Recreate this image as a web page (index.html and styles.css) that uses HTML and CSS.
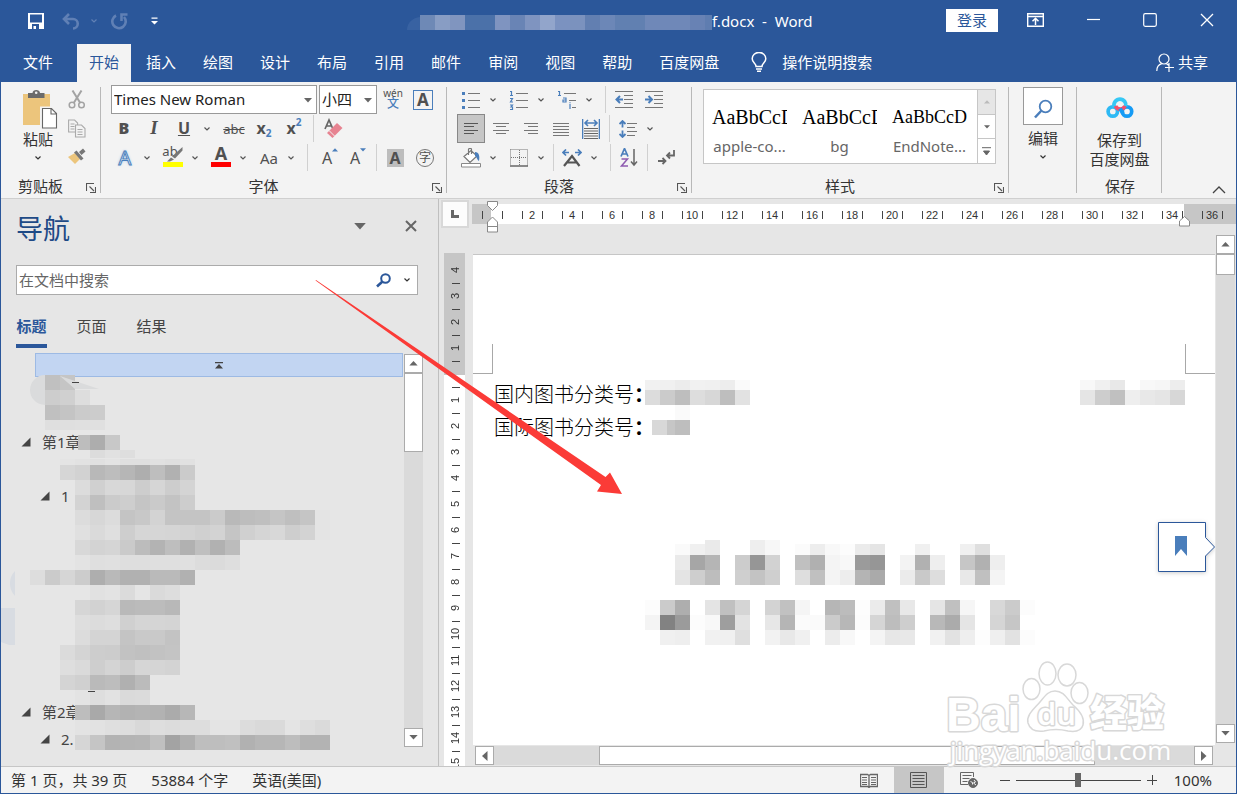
FILE: index.html
```html
<!DOCTYPE html>
<html lang="zh-CN">
<head>
<meta charset="utf-8">
<title>Word</title>
<link rel="stylesheet" href="styles.css">
</head>
<body>
<svg class="defs" aria-hidden="true">
  <symbol id="chev" viewBox="0 0 8 6"><path d="M1.500 1.500L4 4l2.500-2.500" fill="none" stroke="currentColor" stroke-width="1.200"/></symbol>
  <symbol id="launch" viewBox="0 0 10 10"><path d="M.5 8V.5H8M3.500 3.500L8 8M9.500 4v5.500H4" fill="none" stroke="#555" stroke-width="1.100"/></symbol>
  <symbol id="tri-down" viewBox="0 0 10 6"><path d="M0 0h10L5 5.500z" fill="currentColor"/></symbol>
  <symbol id="tri-up" viewBox="0 0 10 6"><path d="M0 5.500h10L5 0z" fill="currentColor"/></symbol>
  <symbol id="node" viewBox="0 0 10 10"><path d="M9.500.5v9H.5z" fill="#444"/></symbol>
</svg>
<div class="window">
  <header class="titlebar">
    <div class="quick">
      <button class="q save" aria-label="保存"><svg width="16" height="16" viewBox="0 0 16 16"><path d="M0 0h16v16H0zM2 1.500v8h12v-8zM4 11v5h1.500v-3H8v3h3v-5z" fill="#fff" fill-rule="evenodd"/></svg></button>
      <button class="q dim" aria-label="撤消"><svg width="18" height="17" viewBox="0 0 18 17"><path d="M7 1L2 6l5 5M2.500 6H11a4.500 4.500 0 0 1 0 9.500" fill="none" stroke="currentColor" stroke-width="2.600"/></svg></button>
      <button class="q dim" aria-label="撤消列表"><svg width="8" height="6"><use href="#chev"/></svg></button>
      <button class="q dim redo" aria-label="重复"><svg width="17" height="17" viewBox="0 0 17 17"><path d="M5 2.500a6.700 6.700 0 1 0 8 1.500M10.500 8V1.500h6" fill="none" stroke="currentColor" stroke-width="2.600"/></svg></button>
      <button class="q" aria-label="自定义"><svg width="7" height="8" viewBox="0 0 7 8"><path d="M.5.500h6v1.200h-6zM0 4h7L3.500 7.500z" fill="#fff"/></svg></button>
    </div>
    <div class="doc-title"><svg class="title-mosaic" width="305" height="38" viewBox="407 13 305 38" data-mosaic="title"></svg><h1>f.docx&nbsp; -&nbsp; Word</h1></div>
    <div class="win-buttons">
      <button class="login">登录</button>
      <button class="q" aria-label="功能区显示选项"><svg width="17" height="14" viewBox="0 0 17 14" fill="none" stroke="#fff"><path d="M.7.700h15.600v12.600H.7zM1 3.500h15" stroke-width="1.400"/><path d="M8.500 12V5.500M5.500 8.200l3-3 3 3" stroke-width="1.500"/></svg></button>
      <button class="q" aria-label="最小化"><svg width="13" height="14" viewBox="0 0 13 14"><path d="M0 6.500h13" stroke="#fff" stroke-width="1.200"/></svg></button>
      <button class="q" aria-label="最大化"><svg width="14" height="14" viewBox="0 0 14 14"><rect x=".7" y=".7" width="12.600" height="12.600" rx="1.500" fill="none" stroke="#fff" stroke-width="1.200"/></svg></button>
      <button class="q" aria-label="关闭"><svg width="14" height="14" viewBox="0 0 14 14"><path d="M1 1l12 12M13 1L1 13" stroke="#fff" stroke-width="1.300"/></svg></button>
    </div>
  </header>

  <nav class="tabs">
    <button class="tab file">文件</button><button class="tab active">开始</button><button class="tab">插入</button><button class="tab">绘图</button><button class="tab">设计</button><button class="tab">布局</button><button class="tab">引用</button><button class="tab">邮件</button><button class="tab">审阅</button><button class="tab">视图</button><button class="tab">帮助</button><button class="tab">百度网盘</button>
    <button class="tab tell"><svg width="16" height="20" viewBox="0 0 16 20" fill="none" stroke="#fff" stroke-width="1.500"><path d="M5 14.500c0-3-3.800-4-3.800-7.800a6.700 6.200 0 0 1 13.600 0c0 3.800-3.800 4.800-3.800 7.800zM5 17h6M6 19.300h4"/></svg>操作说明搜索</button>
    <button class="tab share"><svg width="18" height="19" viewBox="0 0 18 19" fill="none" stroke="#fff" stroke-width="1.200"><circle cx="8" cy="6" r="5"/><path d="M.8 18c0-4 2-6.500 5-7.300M10.500 10.700l2 1.500M13 10v9M9 14.500h9"/></svg>共享</button>
  </nav>

  <section class="ribbon">
    <div class="group clipboard">
      <div class="body clip-body">
        <button class="paste"><svg width="36" height="40" viewBox="0 0 36 40"><path d="M1 4h27v31H1z" fill="#ecc57c"/><path d="M6 3h4.500c0-4 7.500-4 7.500 0h4.500v5H6z" fill="#6b6b6b"/><circle cx="14.200" cy="2.800" r="1.300" fill="#f3f3f3"/><path d="M19.500 18h10l5 5v15.500h-15z" fill="#fff" stroke="#f3f3f3" stroke-width="3"/><path d="M20.500 18.500h9l5 5v14.500h-14zM29 18.500v5.500h5.500" fill="#fff" stroke="#666" stroke-width="1.100"/></svg><span>粘贴</span><svg width="8" height="6"><use href="#chev"/></svg></button>
        <div class="clip-side">
          <button class="ic" aria-label="剪切"><svg width="18" height="19" viewBox="0 0 18 19" fill="none" stroke="#a3a3a3" stroke-width="1.500"><path d="M4.500.5l7.800 12.500M13.500.5L5.700 13" stroke-width="2"/><circle cx="4" cy="15" r="2.800"/><circle cx="13.500" cy="15" r="2.800"/></svg></button>
          <button class="ic" aria-label="复制"><svg width="18" height="19" viewBox="0 0 18 19" fill="#f3f3f3" stroke="#aaa" stroke-width="1.100"><path d="M.6 1h6l3 3v9H.6zM2.500 5h4M2.500 7.500h4M2.500 10h4"/><path d="M7.500 6h6l3.500 3.500V18H7.500zM9.500 10.500h5M9.500 13h5M9.500 15.500h5"/></svg></button>
          <button class="ic" aria-label="格式刷"><svg width="18" height="16" viewBox="0 0 18 16"><path d="M0 9l7-4 5 6-5 5z" fill="#ecc57c"/><path d="M6 4.500l2.500-2 7 8-2.500 2zM11 4l4-3.500 2.500 3-4 3.500z" fill="#777"/></svg></button>
        </div>
      </div>
      <div class="caption"><span>剪贴板</span><button class="launcher" aria-label="剪贴板选项"><svg width="10" height="10"><use href="#launch"/></svg></button></div>
    </div>

    <div class="group font">
      <div class="body">
        <div class="row">
          <label class="combo family"><select aria-label="字体"><option>Times New Roman</option></select><svg width="8" height="5"><use href="#tri-down"/></svg></label>
          <label class="combo size"><select aria-label="字号"><option>小四</option></select><svg width="8" height="5"><use href="#tri-down"/></svg></label>
          <button class="btn wen" aria-label="拼音指南"><span>wén</span><b>文</b></button>
          <button class="btn boxed"><span>A</span></button>
        </div>
        <div class="row second">
          <button class="btn w30 glyph"><b>B</b></button><button class="btn w30 glyph serif"><i>I</i></button><button class="btn w30 glyph"><u>U</u></button><button class="drop" aria-label="下划线"><svg width="8" height="6"><use href="#chev"/></svg></button><button class="btn w30 abc after"><s>abc</s></button><button class="btn w30 xx">x<sub>2</sub></button><button class="btn w30 xx">x<sup>2</sup></button><i class="sep"></i>
          <button class="btn w30" aria-label="清除格式"><svg width="19" height="21" viewBox="0 0 19 21"><path d="M1 11L5 2l3.500 8M2.500 8h4.500" fill="none" stroke="#666" stroke-width="1.700"/><path d="M3 15L13 5l5.500 5-10 10z" fill="#e78391"/><path d="M5 12.500l5.500 5.500" stroke="#f3f3f3"/></svg></button>
        </div>
        <div class="row third">
          <button class="btn effect">A</button><button class="drop" aria-label="文本效果"><svg width="8" height="6"><use href="#chev"/></svg></button>
          <button class="btn bar yellow after"><span>ab</span><svg width="16" height="15" viewBox="0 0 16 15"><path d="M15.500 0v3.500L8 11.500 5 9.500zM4 10.500l3 2-4 2H0z" fill="#777"/></svg></button><button class="drop" aria-label="突出显示颜色"><svg width="8" height="6"><use href="#chev"/></svg></button>
          <button class="btn bar red after">A</button><button class="drop" aria-label="字体颜色"><svg width="8" height="6"><use href="#chev"/></svg></button>
          <button class="btn case after">Aa</button><button class="drop" aria-label="更改大小写"><svg width="8" height="6"><use href="#chev"/></svg></button><i class="sep wide"></i>
          <button class="btn grow after">A<svg width="6" height="4"><use href="#tri-up"/></svg></button><button class="btn grow">A<svg width="6" height="4"><use href="#tri-down"/></svg></button><i class="sep"></i>
          <button class="btn shade"><span>A</span></button><button class="btn ring next"><span>字</span></button>
        </div>
      </div>
      <div class="caption"><span>字体</span><button class="launcher" aria-label="字体选项"><svg width="10" height="10"><use href="#launch"/></svg></button></div>
    </div>

    <div class="group para">
      <div class="body">
        <div class="row">
          <button class="btn" aria-label="项目符号"><svg width="20" height="18" viewBox="0 0 20 18"><path d="M7 2.500h12M7 9.500h12M7 16.500h12" stroke="#777"/><path d="M1 1h3v3H1zM1 8h3v3H1zM1 15h3v3H1z" fill="#4a7ebb"/></svg></button><button class="drop" aria-label="项目符号库"><svg width="8" height="6"><use href="#chev"/></svg></button>
          <button class="btn after" aria-label="编号"><svg width="20" height="20" viewBox="0 0 20 20"><path d="M7 3.500h12M7 10.500h12M7 17.500h12" stroke="#777"/><path d="M1 1.500h1.500V5M1 5.500h3M1 8.500h2.500L1.500 12H4M1 15h2.500L2 17h1.500v2.500H1" fill="none" stroke="#4a7ebb" stroke-width="1.200"/></svg></button><button class="drop" aria-label="编号库"><svg width="8" height="6"><use href="#chev"/></svg></button>
          <button class="btn after" aria-label="多级列表"><svg width="20" height="20" viewBox="0 0 20 20"><path d="M7 3.500h12M12 10.500h7M15 17.500h4" stroke="#777"/><path d="M1 1.500h1.500V5M1 5.500h3M6 8h3v4H6v-2h3M13 14v5M13 12.200v1" fill="none" stroke="#4a7ebb" stroke-width="1.200"/></svg></button><button class="drop" aria-label="列表库"><svg width="8" height="6"><use href="#chev"/></svg></button><i class="sep wide"></i>
          <button class="btn" aria-label="减少缩进"><svg width="18" height="17" viewBox="0 0 18 17"><path d="M0 .5h18M9 4.500h9M9 8.500h9M9 12.500h9M0 16.500h18" stroke="#777"/><path d="M8 8.500H1.500M5 5L1.500 8.500 5 12" fill="none" stroke="#4a7ebb" stroke-width="2"/></svg></button>
          <button class="btn next" aria-label="增加缩进"><svg width="18" height="17" viewBox="0 0 18 17"><path d="M0 .5h18M9 4.500h9M9 8.500h9M9 12.500h9M0 16.500h18" stroke="#777"/><path d="M0 8.500h6.500M3.500 5L7 8.500 3.500 12" fill="none" stroke="#4a7ebb" stroke-width="2"/></svg></button>
        </div>
        <div class="row">
          <button class="btn on" aria-label="左对齐"><svg width="14" height="13" viewBox="0 0 14 13"><path d="M0 1.500h14M0 4.500h10M0 8.500h14M0 11.500h10" stroke="#555"/></svg></button>
          <button class="btn next" aria-label="居中"><svg width="16" height="13" viewBox="0 0 16 13"><path d="M0 1.500h16M3 4.500h10M0 8.500h16M3 11.500h10" stroke="#777"/></svg></button>
          <button class="btn next" aria-label="右对齐"><svg width="14" height="13" viewBox="0 0 14 13"><path d="M0 1.500h14M4 4.500h10M0 8.500h14M4 11.500h10" stroke="#777"/></svg></button>
          <button class="btn next" aria-label="两端对齐"><svg width="16" height="14" viewBox="0 0 16 14"><path d="M0 1.500h16M0 4.500h16M0 7.500h16M0 10.500h16M0 13.500h16" stroke="#777"/></svg></button>
          <button class="btn next" aria-label="分散对齐"><svg width="18" height="20" viewBox="0 0 18 20"><path d="M.5 0v20M17.500 0v20M3 4h12M6 1L3 4l3 3M12 1l3 3-3 3" fill="none" stroke="#4a7ebb" stroke-width="1.600"/><path d="M2 9.500h14M2 12h14M2 14.500h14M2 17h14M2 19.500h14" stroke="#666" stroke-width="1.200"/></svg></button><i class="sep"></i>
          <button class="btn" aria-label="行距"><svg width="18" height="18" viewBox="0 0 18 18"><path d="M3.500 1v6.500M.5 4l3-3 3 3M3.500 17v-6.500M.5 14l3 3 3-3" fill="none" stroke="#4a7ebb" stroke-width="1.800"/><path d="M8 3.500h10M8 7.500h8M8 11.500h10M8 15.500h8" stroke="#777"/></svg></button><button class="drop" aria-label="行距列表"><svg width="8" height="6"><use href="#chev"/></svg></button>
        </div>
        <div class="row">
          <button class="btn" aria-label="底纹"><svg width="20" height="20" viewBox="0 0 20 20"><path d="M3 8.500l7-6 6 5.500-7 6.500zM7.500 7V1.500c0-1.500 3-1.500 3 0V6" fill="#fff" stroke="#777" stroke-width="1.200"/><path d="M14 4c4 0 5 4 4 9-2-1-2-4-4-5z" fill="#4a7ebb"/><path d="M.5 15.500h19V19H.5z" fill="#fff" stroke="#888"/></svg></button><button class="drop" aria-label="底纹颜色"><svg width="8" height="6"><use href="#chev"/></svg></button>
          <button class="btn after" aria-label="边框"><svg width="18" height="18" viewBox="0 0 18 18"><path d="M.5.5h17v16M.5.5v16M9.500 1v15M1 8.500h16" fill="none" stroke="#777" stroke-dasharray="1 1"/><path d="M0 17h18" stroke="#666" stroke-width="1.500"/></svg></button><button class="drop" aria-label="边框列表"><svg width="8" height="6"><use href="#chev"/></svg></button><i class="sep"></i>
          <button class="btn" aria-label="中文版式"><svg width="20" height="18" viewBox="0 0 20 18"><path d="M2 17L10 7l7.500 10M5 13.500h10" fill="none" stroke="#555" stroke-width="2.200"/><path d="M1 3.500h6M4 .5l-3 3 3 3M13 3.500h6M16 .5l3 3-3 3" fill="none" stroke="#4a7ebb" stroke-width="1.700"/></svg></button><button class="drop" aria-label="版式列表"><svg width="8" height="6"><use href="#chev"/></svg></button><i class="sep wide"></i>
          <button class="btn" aria-label="排序"><svg width="18" height="19" viewBox="0 0 18 19" fill="none" stroke-width="1.500"><path d="M1 8.500l3.500-8 3.500 8M2.500 6h4.500" stroke="#4a7ebb" stroke-width="1.700"/><path d="M1.500 11h6L1.500 18h6.500" stroke="#8e5bb0"/><path d="M14 1v16M11 13.500l3 3.500 3-3.500" stroke="#666"/></svg></button><i class="sep"></i>
          <button class="btn" aria-label="显示编辑标记"><svg width="17" height="15" viewBox="0 0 17 15" fill="none" stroke="#666" stroke-width="1.800"><path d="M16 0v5.500H9M12 2.500L9 5.500l3 3M0 11h7M4.500 8l3 3-3 3"/></svg></button>
        </div>
      </div>
      <div class="caption"><span>段落</span><button class="launcher" aria-label="段落选项"><svg width="10" height="10"><use href="#launch"/></svg></button></div>
    </div>

    <div class="group styles">
      <div class="body">
        <div class="gallery">
          <button class="style"><span class="preview">AaBbCcDd</span><span>apple-co...</span></button>
          <button class="style"><span class="preview">AaBbCcDd</span><span>bg</span></button>
          <button class="style"><span class="preview small">AaBbCcDd</span><span>EndNote...</span></button>
          <div class="gscroll"><button disabled aria-label="上一行"><svg width="6" height="4"><use href="#tri-up"/></svg></button><button aria-label="下一行"><svg width="6" height="4"><use href="#tri-down"/></svg></button><button aria-label="其他"><svg width="9" height="9" viewBox="0 0 9 9"><path d="M0 .7h9M1.500 4h6l-3 4z" fill="#666" stroke="#666"/></svg></button></div>
        </div>
      </div>
      <div class="caption"><span>样式</span><button class="launcher" aria-label="样式选项"><svg width="10" height="10"><use href="#launch"/></svg></button></div>
    </div>

    <div class="group edit">
      <button class="find"><span class="lens"><svg width="20" height="20" viewBox="0 0 20 20" fill="none" stroke="#4a7ebb"><circle cx="12.500" cy="7.500" r="5.800" stroke-width="1.800"/><path d="M8.500 11.500L2 18.500" stroke-width="2.500"/></svg></span><span>编辑</span><svg width="8" height="6"><use href="#chev"/></svg></button>
    </div>

    <div class="group cloud">
      <button class="pan"><svg width="28" height="22" viewBox="0 0 28 22" fill="none" stroke-width="3.700"><circle cx="6.800" cy="14.500" r="4.700" stroke="#2db9f4"/><circle cx="21" cy="14.500" r="4.700" stroke="#159bf5"/><path d="M8.200 10a6 6 0 0 1 1-5.500 6 6 0 0 1 9.500 0 6 6 0 0 1 1 5" stroke="#36c8f5"/><path d="M9.500 9a5.200 5.200 0 0 0 9.500 0" stroke="#f6506b"/><path d="M14 11.500l3 5" stroke="#159bf5"/></svg><span>保存到<br>百度网盘</span></button>
      <div class="caption plain"><span>保存</span></div>
    </div>
    <button class="collapse" aria-label="折叠功能区"><svg width="14" height="8" viewBox="0 0 14 8"><path d="M1 7l6-6 6 6" fill="none" stroke="#444" stroke-width="1.300"/></svg></button>
  </section>

  <main class="workspace">
    <aside class="navpane">
      <div class="nav-head"><h2>导航</h2><button aria-label="任务窗格选项"><svg width="12" height="7"><use href="#tri-down"/></svg></button><button aria-label="关闭窗格"><svg width="12" height="12" viewBox="0 0 12 12"><path d="M1 1l10 10M11 1L1 11" stroke="#666" stroke-width="2"/></svg></button></div>
      <div class="search"><input type="text" placeholder="在文档中搜索" aria-label="在文档中搜索"><button aria-label="搜索"><svg width="16" height="15" viewBox="0 0 16 15" fill="none" stroke="#2b579a"><circle cx="9.500" cy="5.500" r="4.300" stroke-width="2"/><path d="M6.500 8.500L1 13.500" stroke-width="2.600"/></svg></button><button aria-label="搜索选项"><svg width="8" height="6"><use href="#chev"/></svg></button></div>
      <div class="nav-tabs"><button class="current">标题</button><button>页面</button><button>结果</button></div>
      <div class="outline">
        <ul class="tree">
          <li class="selected"><svg width="8" height="7" viewBox="0 0 8 7"><path d="M0 0h8v1.200H0zM4 2l4 4.500H0z" fill="#444"/></svg></li>
          <li></li><li></li>
          <li class="l1"><svg width="10" height="10"><use href="#node"/></svg>第1章</li>
          <li></li>
          <li class="l2"><svg width="10" height="10"><use href="#node"/></svg>1</li>
          <li></li><li></li><li></li><li></li><li></li><li></li><li></li>
          <li class="l1"><svg width="10" height="10"><use href="#node"/></svg>第2章</li>
          <li class="l2"><svg width="10" height="10"><use href="#node"/></svg>2.</li>
        </ul>
        <div class="vbar"><button aria-label="向上"><svg width="9" height="5"><use href="#tri-up"/></svg></button><div class="thumb"></div><div class="track"></div><button aria-label="向下"><svg width="9" height="5"><use href="#tri-down"/></svg></button></div>
      </div>
      <svg class="overlay" width="437" height="567" viewBox="1 199 437 567" data-mosaic="nav" aria-hidden="true"></svg>
    </aside>

    <section class="editor">
      <div class="ruler-row">
        <button class="corner" aria-label="制表符"><svg width="8" height="8" viewBox="0 0 8 8"><path d="M1.500 0v6.500H8" fill="none" stroke="#666" stroke-width="3"/></svg></button>
        <div class="ruler"><div class="hnums"></div>
          <svg class="mark left" width="12" height="32" viewBox="0 0 12 32" fill="#fff" stroke="#888"><path d="M.5.500h10v4l-5 5-5-5zM.5 25v-4l5-5 5 5v10H.5zM.5 25.500h10"/></svg>
          <svg class="mark right" width="12" height="11" viewBox="0 0 12 11" fill="#fff" stroke="#888"><path d="M.5 10V5l5-4.500 5 4.500v5z"/></svg>
        </div>
      </div>
      <div class="canvas">
        <div class="vruler"><div class="vnums"></div></div>
        <div class="center">
          <article class="page">
            <i class="crop tl"></i><i class="crop tr"></i>
            <p>国内图书分类号<b>：</b></p>
            <p>国际图书分类号<b>：</b></p>
            <svg class="overlay" width="742" height="490" viewBox="473 255 742 490" data-mosaic="doc" aria-hidden="true"></svg>
            <button class="bookmark" aria-label="书签"><svg width="57" height="50" viewBox="0 0 57 50"><path d="M.5.500h47v15l9 9.500-9 9V49.500H.5z" fill="#fff" stroke="#2b579a"/><path d="M17 14h12v20l-6-7-6 7z" fill="#4a7ebb"/></svg></button>
          </article>
          <div class="hbar"><button aria-label="向左"><svg width="6" height="10" viewBox="0 0 6 10"><path d="M5.500 0v10L0 5z" fill="#666"/></svg></button><div class="track a"></div><div class="thumb"></div><div class="track b"></div><button aria-label="向右"><svg width="6" height="10" viewBox="0 0 6 10"><path d="M0 0v10l5.500-5z" fill="#666"/></svg></button></div>
        </div>
        <div class="vbar main"><button aria-label="向上滚动"><svg width="9" height="5"><use href="#tri-up"/></svg></button><div class="thumb"></div><div class="track"></div><button aria-label="向下滚动"><svg width="9" height="5"><use href="#tri-down"/></svg></button></div>
      </div>
      <svg class="watermark" width="226" height="110" viewBox="946 658 226 110">
        <g fill="#fff" stroke="#d8d8d8" stroke-width="1.500">
          <ellipse cx="1032.500" cy="689" rx="8.500" ry="10.500"/><ellipse cx="1048.500" cy="673.500" rx="8.500" ry="11.500"/><ellipse cx="1068" cy="675" rx="9" ry="11"/><ellipse cx="1080.500" cy="693" rx="8.500" ry="10.500"/>
          <path d="M1056 691c9 0 12 8 18 14 8 7 12 13 10 20-2 7-9 7-15 6-8-2-16-2-24 0-8 1-14-1-16-8-2-8 6-14 12-21 5-6 8-11 15-11z"/>
          <g paint-order="stroke" stroke-width="3" stroke-linejoin="round" class="wm">
            <text x="947" y="731" font-size="48" class="bai">Bai</text>
            <text x="1038" y="725" font-size="31" font-weight="600">du</text>
            <text x="1091" y="727" font-size="37" font-weight="900">经验</text>
            <text x="951" y="760" font-size="26">jingyan.baidu.com</text>
          </g>
        </g>
      </svg>
    </section>
  </main>

  <footer class="status">
    <span>第 1 页，共 39 页</span><span>53884 个字</span><span>英语(美国)</span>
    <div class="views">
      <button aria-label="阅读视图"><svg width="18" height="15" viewBox="0 0 18 15" fill="none" stroke="#666"><path d="M.5 1.500h7l1.500 1 1.500-1h7v12h-7l-1.500 1-1.500-1h-7zM9 2v12" stroke-width="1.300"/><path d="M2 4.500h5M2 7h5M2 9.500h5M2 11.500h5M11 4.500h5M11 7h5M11 9.500h5M11 11.500h5"/></svg></button>
      <button class="on" aria-label="页面视图"><svg width="17" height="16" viewBox="0 0 17 16" fill="none" stroke="#555"><path d="M.5.500h16v15H.5zM2.500 3.500h12M2.500 6.500h12M2.500 9.500h12M2.500 12.500h12"/></svg></button>
      <button aria-label="Web 视图"><svg width="18" height="16" viewBox="0 0 18 16" fill="none" stroke="#666"><path d="M8 12.500H.5V.500h13V5M2.500 3.500h9M2.500 6.500h7M2.500 9.500h5"/><circle cx="13" cy="11" r="4.500" fill="#666"/><path d="M10.500 9.500l2 1 0 2M14 8l1.500 2-2 1 2.500 2" stroke="#f3f3f3"/></svg></button>
    </div>
    <div class="zoom"><button aria-label="缩小"><svg width="10" height="10"><path d="M0 5.500h10" stroke="#444"/></svg></button><input type="range" aria-label="缩放" min="0" max="100" value="50"><button aria-label="放大"><svg width="10" height="10"><path d="M0 5.500h10M5.500 0v10" stroke="#444"/></svg></button><span>100%</span></div>
  </footer>
  <svg class="arrow" width="320" height="230" viewBox="310 270 320 230" aria-hidden="true"><path d="M316 280L605.500 477l4.500-4.500L622 494l-25-2.500 4-6.500L315.500 280.500z" fill="#fb3b37"/></svg>
</div>
<script src="script.js"></script>
</body>
</html>
```
FILE: styles.css
```css
* { box-sizing: border-box; }
body {
  margin: 0;
  font: 15px/20px "Noto Sans", "Noto Sans CJK SC", sans-serif;
  color: #333;
}
button, input, select { font: inherit; color: inherit; }
button { border: 0; padding: 0; background: none; }
h1, h2, p, ul { margin: 0; padding: 0; font-weight: 400; }
svg { display: block; flex: none; }
.defs { display: none; }
.window {
  position: relative;
  height: 100vh;
  display: flex;
  flex-direction: column;
  overflow: hidden;
  background: #e6e6e6;
  border: 1px solid #2b579a;
  border-top: 0;
}

/* title bar */
.titlebar {
  height: 44px;
  flex: none;
  display: flex;
  align-items: center;
  background: #2b579a;
  color: #fff;
}
.quick { display: flex; align-items: center; gap: 18px; padding: 0 0 2px 27px; width: 406px; }
.q.dim { color: #6080b5; }
.quick .q:nth-child(3) { margin: 0 -5px 0 -8px; }
.quick .redo { margin-right: 5px; }
.doc-title { display: flex; align-items: center; flex: 1; height: 44px; overflow: hidden; }
.doc-title h1 { font-size: 15px; white-space: pre; padding-bottom: 2px; }
.title-mosaic { align-self: flex-start; margin-top: 13px; }
.win-buttons { display: flex; align-items: center; padding-right: 22px; margin-top: -4px; }
.login { width: 52px; height: 23px; background: #fff; color: #2b579a; margin-right: 29px; }
.win-buttons .q { margin-right: 43px; }
.win-buttons .q:last-child { margin-right: 0; }

/* tab strip */
.tabs { display: flex; flex: none; height: 38px; gap: 3px; background: #2b579a; }
.tab { color: #fff; padding: 0 12px 2px; white-space: nowrap; }
.tab.file { padding: 0 24px 2px 22px; margin-right: -3px; }
.tab.active { background: #f3f3f3; color: #2b579a; }
.tab.tell { display: flex; align-items: center; gap: 15px; padding-left: 17px; }
.tab.share { display: flex; align-items: center; gap: 4px; margin-left: auto; padding-right: 28px; }

/* ribbon */
.ribbon {
  display: flex;
  flex: none;
  height: 117px;
  padding-top: 3px;
  background: #f3f3f3;
  border-bottom: 1px solid #cfcfcf;
  color: #333;
}
.group { position: relative; display: flex; flex-direction: column; flex: none; }
.group::after {
  content: "";
  position: absolute;
  right: 0;
  top: 2px;
  bottom: 5px;
  width: 1px;
  background: #b8b8b8;
}
.body { height: 87px; flex: none; }
.caption { display: flex; align-items: center; flex: 1; padding: 1px 5px 0 1px; }
.caption span { flex: 1; text-align: center; padding-right: 7px; }
.caption.plain, .caption.plain span { padding-right: 0; }
.launcher { width: 10px; margin-top: 4px; }
.clipboard { width: 100px; }
.clipboard .caption span { text-align: left; padding: 0 0 0 16px; }
.font { width: 346px; }
.para { width: 245px; }
.styles { width: 317px; }
.edit { width: 68px; }
.cloud { width: 85px; }

.clip-body { display: flex; gap: 10px; padding: 5px 0 0 21px; }
.paste { display: flex; flex-direction: column; align-items: center; width: 36px; }
.paste span { white-space: nowrap; line-height: 19px; margin-right: 4px; }
.paste svg:last-child { margin: 6px 4px 0 0; }
.clip-side { display: flex; flex-direction: column; gap: 10px; }

.row { display: flex; height: 29px; align-items: center; padding-left: 10px; }
.row.second { padding-left: 8px; }
.btn { width: 28px; height: 29px; display: flex; align-items: center; justify-content: center; color: #505050; flex: none; }
.w30 { width: 30px; }
.drop { width: 16px; height: 29px; display: flex; align-items: center; justify-content: center; color: #555; flex: none; }
.after { margin-left: 4px; }
.next { margin-left: 2px; }
.sep { width: 1px; height: 27px; margin: 0 4px; background: #d0d0d0; flex: none; }
.sep.wide { margin-left: 8px; }
.on { background: #c6c6c6; border: 1px solid #888; }
.combo { position: relative; height: 29px; border: 1px solid #999; background: #fff; margin-right: 2px; }
.combo.family { width: 206px; }
.combo.size { width: 58px; }
.combo select {
  width: 100%;
  height: 27px;
  padding: 0 2px 1px;
  border: 0;
  background: none;
  appearance: none;
  color: #222;
}
.combo svg { position: absolute; right: 4px; top: 12px; color: #666; }
.wen { flex-direction: column; font-size: 10px; line-height: 9px; }
.wen b { font-size: 12px; line-height: 12px; font-weight: 500; color: #4a7ebb; }
.boxed { margin-left: 2px; }
.boxed span { width: 20px; height: 20px; border: 1px solid #4a7ebb; font-size: 17px; font-weight: 700; line-height: 18px; }
.glyph { font-size: 16px; font-weight: 700; padding-bottom: 2px; }
.serif { font-family: "Liberation Serif", serif; font-size: 19px; }
.abc { font-size: 13px; }
.xx { font-size: 16px; font-weight: 700; padding-bottom: 2px; }
.xx sub, .xx sup { font-size: 10px; line-height: 10px; color: #4a7ebb; }
.xx sub { margin-top: 10px; }
.xx sup { margin-top: -12px; }
.effect { font-size: 20px; font-weight: 400; color: #fff; -webkit-text-stroke: 1px #4a7ebb; text-shadow: 0 0 3px #8fbbe8; }
.bar { border: solid transparent; border-width: 0 4px; align-items: flex-start; font-size: 18px; font-weight: 700; padding-bottom: 4px; position: relative; }
.bar::after { content: ""; position: absolute; left: 0; bottom: 5px; width: 20px; height: 5px; }
.yellow { font-size: 13px; font-weight: 400; }
.yellow svg { margin: 4px 0 0 -11px; }
.yellow span { margin: -2px 0 0 -1px; }
.yellow::after { background: #ff0; }
.red::after { background: #f00; }
.case { font-size: 15px; }
.grow { font-size: 16px; align-items: flex-start; padding-top: 5px; }
.grow svg { color: #4a7ebb; }
.shade span { width: 17px; height: 18px; background: #bdbdbd; font-size: 16px; font-weight: 700; line-height: 18px; }
.ring span { width: 18px; height: 18px; border: 1px solid #777; border-radius: 50%; font-size: 12px; line-height: 16px; }

.gallery { display: flex; margin: 4px 13px 0 11px; height: 75px; border: 1px solid #c6c6c6; background: #fff; }
.style { width: 90px; padding: 5px 7px 0 8px; color: #666; text-align: center; flex: none; }
.style span { display: block; white-space: nowrap; }
.style .preview { overflow: hidden; width: 75px; text-align: left; font: 20px/34px "Liberation Serif", serif; color: #000; }
.style .small { font-size: 18px; }
.style span:last-child { line-height: 25px; margin: 0 -4px; }
.gscroll { margin-left: auto; width: 18px; display: flex; flex-direction: column; border-left: 1px solid #c6c6c6; }
.gscroll button { flex: 1; display: grid; place-items: center; color: #666; }
.gscroll button + button { border-top: 1px solid #c6c6c6; }
.gscroll button:disabled { background: #e6e6e6; color: #bbb; }

.find { display: flex; flex-direction: column; align-items: center; padding-top: 2px; }
.find .lens { width: 40px; height: 38px; border: 1px solid #999; background: #fff; display: grid; place-items: center; margin-bottom: 3px; }
.find svg:last-child { margin-top: 6px; }
.pan { display: flex; flex-direction: column; align-items: center; height: 87px; padding-top: 12px; line-height: 19px; }
.pan span { margin-top: 12px; }
.collapse { margin: auto 10px 4px auto; }

/* navigation pane */
.workspace { flex: 1; min-height: 0; display: flex; }
.navpane { position: relative; width: 438px; flex: none; padding: 14px 15px 0; border-right: 1px solid #bfbfbf; display: flex; flex-direction: column; }
.overlay { position: absolute; left: 0; top: 0; pointer-events: none; }
.nav-head { display: flex; align-items: center; height: 32px; padding-right: 6px; }
.nav-head h2 { flex: 1; font-size: 27px; color: #1e4a86; }
.nav-head button { color: #666; margin-left: 39px; margin-top: -6px; }
.search { display: flex; align-items: center; margin: 20px 5px 0 0; width: 402px; height: 30px; border: 1px solid #ababab; background: #fff; }
.search input { flex: 1; border: 0; outline: 0; padding: 0 2px; height: 28px; background: none; }
.search input::placeholder { color: #666; opacity: 1; }
.search button:last-child { margin: 0 6px 0 11px; }
.nav-tabs { display: flex; gap: 29px; margin-top: 17px; height: 36px; }
.nav-tabs button { height: 36px; padding: 0 0 8px; width: 31px; color: #444; white-space: nowrap; }
.nav-tabs .current { color: #2b579a; font-weight: 700; border-bottom: 4px solid #2b579a; padding-bottom: 4px; }
.outline { display: flex; flex: 1; min-height: 0; margin: 5px 0 0; padding-bottom: 19px; }
.tree { width: 368px; margin-left: 19px; list-style: none; }
.tree li { height: 27px; display: flex; align-items: center; color: #444; }
.tree .selected { height: 24px; margin-bottom: -3px; justify-content: center; background: #c2d5f2; border: 1px solid #9dbae4; }
.tree .l1, .tree .l2 { gap: 11px; }
.tree .l1 { margin-left: -14px; }
.tree .l2 { margin-left: 5px; }
.vbar { width: 19px; display: flex; flex-direction: column; margin: 1px 0 0 1px; background: #dadada; }
.vbar button, .hbar button { width: 19px; height: 19px; flex: none; background: #fff; border: 1px solid #ababab; display: grid; place-items: center; color: #666; }
.thumb { background: #fff; border: 1px solid #ababab; }
.vbar .thumb { height: 79px; }
.vbar .track { flex: 1; }

/* document */
.editor { position: relative; flex: 1; min-width: 0; display: flex; flex-direction: column; }
.ruler-row { display: flex; height: 30px; flex: none; }
.corner { width: 28px; height: 28px; margin: 1px 3px 1px 2px; background: #fcfcfc; border: 2px solid #d8d8d8; display: grid; place-items: center; flex: none; }
.ruler {
  position: relative;
  flex: 1;
  min-width: 0;
  height: 20px;
  margin-top: 5px;
  background: linear-gradient(90deg, #c6c6c6 19px, transparent 19px calc(100% - 52px), #c6c6c6 calc(100% - 52px)) #fff;
}
.hnums {
  display: flex;
  height: 20px;
  overflow: hidden;
  padding-left: 40px;
  background: repeating-linear-gradient(90deg, transparent 0 10px, #444 10px 11px, transparent 11px 20px) 0 7px / 100% 8px no-repeat;
  font: 11px/22px "Liberation Sans", sans-serif;
}
.hnums span { width: 40px; flex: none; text-align: center; }
.mark { position: absolute; z-index: 1; }
.mark.left { left: 15px; top: -3px; }
.mark.right { right: 45px; top: 12px; }
.canvas { flex: 1; min-height: 0; display: flex; }
.vruler { width: 21px; margin: 24px 7px 0 5px; overflow: hidden; flex: none; background: linear-gradient(#c6c6c6 122px, #fff 122px); }
.vnums {
  padding-top: 4px;
  font: 11px/23px "Liberation Sans", sans-serif;
  background: repeating-linear-gradient(transparent 0 4px, #444 4px 5px, transparent 5px 26px) 8px 26px / 8px 100% no-repeat;
}
.vnums span { display: block; width: 23px; height: 26px; writing-mode: vertical-rl; transform: rotate(180deg); text-align: center; }
.center { flex: 1; min-width: 0; display: flex; flex-direction: column; padding: 25px 0 1px 1px; }
.page { position: relative; flex: 1; min-height: 0; background: #fff; border-top: 1px solid #c6c6c6; padding: 124px 21px 0; overflow: hidden; }
.page p { font: 300 20px/33px "Liberation Serif", "Noto Sans CJK SC", serif; color: #000; }
.page b { font-weight: 700; }
.crop { position: absolute; top: 89px; width: 20px; height: 30px; border: solid #a8a8a8; border-width: 0 1px 1px 0; }
.crop.tl { left: 0; }
.crop.tr { right: 0; width: 30px; border-width: 0 0 1px 1px; }
.bookmark { position: absolute; right: 0; top: 267px; filter: drop-shadow(0 1px 2px #0003); }
.hbar { display: flex; height: 19px; margin: 1px 2px 0; background: #dadada; flex: none; }
.hbar .a { flex: 105; }
.hbar .thumb { flex: 496; }
.hbar .b { flex: 99; }
.vbar.main { margin: 6px 1px 23px; flex: none; }
.vbar.main .thumb { height: 21px; }
.watermark { position: absolute; right: 65px; bottom: -2px; z-index: 2; pointer-events: none; }
.wm { font-family: "Open Sans", "Noto Sans CJK SC", sans-serif; }
.bai { font-family: "Liberation Sans", sans-serif; font-weight: 700; }

/* status bar */
.status { display: flex; align-items: center; height: 27px; flex: none; padding: 0 24px 0 10px; gap: 24px; background: #f3f3f3; border-top: 1px solid #c6c6c6; white-space: nowrap; }
.views { display: flex; margin-left: auto; height: 26px; }
.views button { width: 50px; display: grid; place-items: center; }
.views .on { border: 0; }
.zoom { display: flex; align-items: center; gap: 6px; margin-left: -18px; }
.zoom input { appearance: none; width: 125px; height: 14px; margin: 0; background: linear-gradient(#444, #444) 0 7px / 100% 1px no-repeat; }
.zoom input::-webkit-slider-thumb { appearance: none; width: 6px; height: 14px; background: #666; }
.zoom span { margin-left: 11px; }

.arrow { position: absolute; left: 309px; top: 270px; z-index: 3; pointer-events: none; }
```
FILE: script.js
```js
// Ruler numbers
const hnums = document.querySelector('.hnums');
for (let n = 2; n <= 36; n += 2) hnums.insertAdjacentHTML('beforeend', `<span>${n}</span>`);
const vnums = document.querySelector('.vnums');
for (const n of [4, 3, 2, 1]) vnums.insertAdjacentHTML('beforeend', `<span>${n}</span>`);
vnums.insertAdjacentHTML('beforeend', '<span></span>');
for (let n = 1; n <= 15; n++) vnums.insertAdjacentHTML('beforeend', `<span>${n}</span>`);

// Pixelated covers: [x, y, height, grey levels], 15px wide cells, "--" for an empty cell
const mosaics = {
  nav: [
    [45, 375, 15, 'c0 c5'], [45, 390, 15, 'cd d0 dd'], [45, 405, 15, 'c0 c4 cb cc'],
    [45, 420, 10, 'df df e0 e0'], [78, 435, 15, 'bd'], [90, 435, 15, 'ad c8'], [90, 450, 8, 'dc e1 de'],
    [60, 459, 6, 'e4 e2 e0 e3 df df e1 df e1'],
    [60, 465, 15, 'd6 d2 b8 bd b6 ae be b1 cb'],
    [75, 480, 15, 'dc d0 d8 d7 cd d6 cd d4'],
    [75, 495, 15, 'd3 bf cb ce c5 ca c3 cd'],
    [75, 510, 15, 'dc d7 dc c4 c8 d3 c4 c4 c4 cb b9 bd bf c5 bf c5 e4'],
    [75, 525, 15, 'e0 da df ce d6 d6 d5 d3 d0 d3 c5 d0 d5 d8 ce d3 e4'],
    [75, 540, 15, 'd8 d3 d5 ca bc b3 be b1 bf b1 bc'],
    [75, 555, 15, 'e3 df e0 de de df df e0 dc db de'],
    [30, 570, 15, 'dd cb d6 cc ae b9 b1 b1 ba ba b1'],
    [90, 585, 15, 'e1 e3 db e5 da dd'],
    [75, 600, 15, 'd6 d2 d6 b9 bb bc b8'],
    [75, 615, 15, 'de dc de d0 d5 d5 d4'],
    [75, 630, 15, 'dc d4 d4 c4 c9 c9 c3'],
    [60, 645, 15, 'db d4 cd cc c2 c0 c2 c4'],
    [60, 660, 15, 'de da ce d4 cd d6 d5 d3'],
    [60, 675, 15, 'd4 d0 ba bd b0 bb'],
    [75, 690, 15, 'e3 de e2 da db'],
    [75, 705, 15, 'bd a9 b6 b2 b4 b2 ab b7'],
    [75, 720, 15, 'e3 e2 df dd d8 de dc dd dd e4 e4 dc d9 da e4 de da'],
    [75, 735, 15, 'd6 c5 b3 b4 b5 c0 a3 af be be c0 b1 b6 b6 bd b3 b3'],
  ],
  doc: [
    [645, 380, 10, 'f1 f0 ec f1 f0 ed fa'], [645, 390, 15, 'dc cb be dd d7 be e2'],
    [675, 405, 15, 'fa'], [652, 420, 15, 'd8 c6'], [675, 420, 15, 'be'],
    [1080, 380, 10, 'f8 f0 e8 -- f8 f6 ed'], [1080, 390, 15, 'e5 cd c0 ee e8 e5 d7'],
    [675, 544, 11, 'fa f0 ea -- -- ee f7 -- fb ed f8 fc eb e5 -- -- f0 -- -- f0 df'],
    [705, 540, 5, 'ea -- -- ee f7'],
    [675, 555, 15, 'ea a6 b5 -- cc 96 d2 -- c0 b0 f4 f8 9b 96 -- f3 b1 ee -- c6 b1 ee'],
    [675, 570, 15, 'e4 ce bd -- cf c3 cf -- de c0 f4 ed b4 aa -- eb c9 dd -- e8 c0 f4'],
    [645, 600, 15, 'fc cb ae -- e4 c0 d5 -- d3 c1 f5 -- b6 bc fd eb c0 e8 -- e5 c0 f6 -- d8 cb fc'],
    [645, 615, 15, 'f4 82 9b fc f8 9e e3 -- e7 b5 fb fa cb b7 fc d5 bd ce -- b8 ab e5 -- d5 c6'],
    [660, 630, 15, 'f0 ee -- f1 f0 df -- f2 e8 f0 -- ec f8 -- f4 e7 e8 -- f1 e2 ee fd ef e2 fc'],
  ],
};
const titleCells = '6e89b6 889dc4 8095bf 4b71a9 4b71a9 7f94c0 6984b5 7f94c0 92a5cb 7b92c0 7b92be 627fb1 6c87b7 6180b1 6180b1 6f88b8 6f88b8 6f88b8 6882b4 5f7db0'.split(' ');
const rect = (x, y, w, h, c) => `<rect x="${x}" y="${y}" width="${w}" height="${h}" fill="#${c}"/>`;

for (const svg of document.querySelectorAll('[data-mosaic]')) {
  const name = svg.dataset.mosaic;
  let out = '';
  if (name === 'title') {
    out += '<path d="M407 30c0-8 6-12 13-13v13z" fill="#3862a2"/>';
    titleCells.forEach((c, i) => { out += rect(420 + 15 * i, 15, 15, 15, c); });
    [[420, 45, '2f5c9f'], [435, 15, '4b71ac'], [450, 15, '35609f'], [480, 45, '33609f'], [540, 45, '4068a8'], [600, 30, '4c73ae']]
      .forEach(([x, w, c]) => { out += rect(x, 45, w, 3, c); });
  } else {
    for (const [x, y, h, row] of mosaics[name]) {
      row.split(' ').forEach((c, i) => { if (c !== '--') out += rect(x + 15 * i, y, 15, h, c + c + c); });
    }
    if (name === 'nav') {
      out += '<path d="M45 375a15 15 0 0 0 0 30zM60 376l39 13H75z" fill="#dadbdc"/>'
        + '<path d="M15 571a18 18 0 0 0 0 25zM1 608h14v37H9l-8-3z" fill="#d8dce2"/>'
        + '<path d="M72 382.500h7M88 691.500h7" stroke="#444"/>';
    }
  }
  svg.innerHTML = out;
}
```
